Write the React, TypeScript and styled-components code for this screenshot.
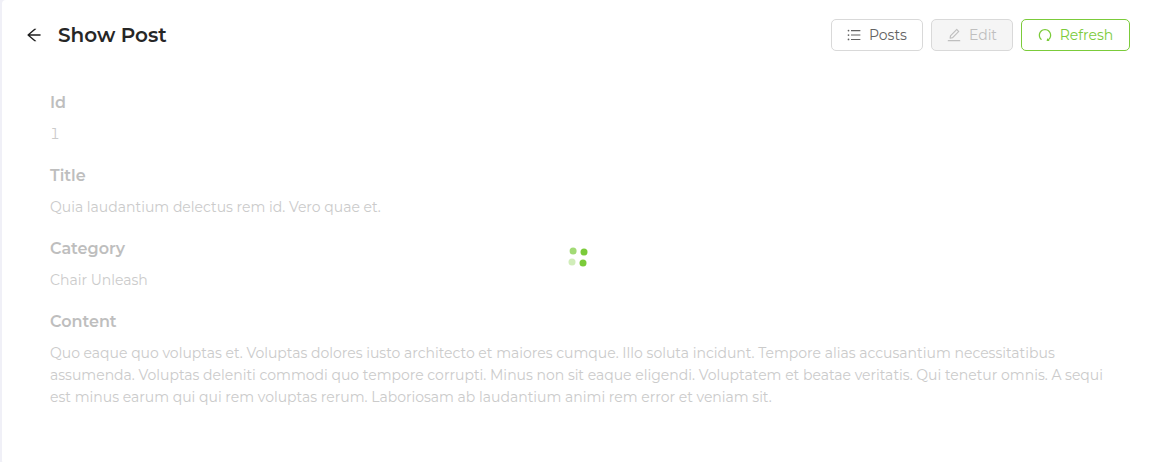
import React from "react";
import styled, { createGlobalStyle } from "styled-components";
import { AiOutlineArrowLeft, AiOutlineEdit, AiOutlineRedo, AiOutlineUnorderedList } from "react-icons/ai";

const GlobalStyle = createGlobalStyle`
  *, *::before, *::after { box-sizing: border-box; }
  body {
    margin: 0;
    background: #f0f0f7;
    color: #262626;
    font-family: Montserrat, Inter, "Liberation Sans", sans-serif;
    font-size: 14px;
    font-variant-numeric: tabular-nums;
    line-height: 22px;
  }
`;

const Card = styled.main`
  min-height: 100vh;
  margin-left: 2px;
  padding: 19px 23px 56px 24px;
  background: #fff;
  border-radius: 4px 0 0 4px;
`;

const Header = styled.header`
  display: flex;
  align-items: center;
  justify-content: space-between;
  height: 32px;
`;

const Heading = styled.div`
  display: flex;
  align-items: center;
  gap: 16px;
`;

const BackButton = styled.button`
  display: flex;
  padding: 0;
  border: 0;
  background: none;
  color: #1f1f1f;
  font-size: 16px;
  cursor: pointer;
`;

const PageTitle = styled.h1`
  margin: 0;
  color: #262626;
  font-size: 20px;
  font-weight: 600;
  line-height: 32px;
`;

const Actions = styled.div`
  display: flex;
  gap: 8px;
`;

const Button = styled.button<{ $primary?: boolean; $minWidth: number }>`
  display: flex;
  align-items: center;
  justify-content: center;
  gap: 8px;
  min-width: ${(p) => p.$minWidth}px;
  height: 32px;
  padding: 0 15px;
  border: 1px solid ${(p) => (p.$primary ? "#7bcb3a" : "#d9d9d9")};
  border-radius: 5px;
  background: #fff;
  color: ${(p) => (p.$primary ? "#7bcb3a" : "#626262")};
  font: inherit;
  cursor: pointer;

  svg {
    font-size: 14px;
  }

  &:disabled {
    background: #f5f5f5;
    color: #bfbfbf;
    cursor: not-allowed;
  }
`;

const Body = styled.section`
  position: relative;
  padding: 40px 24px 0;
`;

const Fields = styled.div`
  display: flex;
  flex-direction: column;
  gap: 19px;
`;

const Label = styled.h2`
  margin: 0 0 8px;
  color: #bebebe;
  font-size: 16px;
  font-weight: 600;
  line-height: 24px;
`;

const Value = styled.p`
  margin: 0;
  color: #cbcbcb;
`;

const Spinner = styled.div`
  position: absolute;
  inset: 54px 0 0;
  display: flex;
  align-items: center;
  justify-content: center;
`;

const ICON_BOX = "64 64 896 896";

const fields = [
  { label: "Id", value: "1" },
  { label: "Title", value: "Quia laudantium delectus rem id. Vero quae et." },
  { label: "Category", value: "Chair Unleash" },
  {
    label: "Content",
    value:
      "Quo eaque quo voluptas et. Voluptas dolores iusto architecto et maiores cumque. Illo soluta incidunt. Tempore alias accusantium necessitatibus assumenda. Voluptas deleniti commodi quo tempore corrupti. Minus non sit eaque eligendi. Voluptatem et beatae veritatis. Qui tenetur omnis. A sequi est minus earum qui qui rem voluptas rerum. Laboriosam ab laudantium animi rem error et veniam sit.",
  },
];

export default function App() {
  return (
    <>
      <GlobalStyle />
      <Card>
        <Header>
          <Heading>
            <BackButton type="button" aria-label="Back">
              <AiOutlineArrowLeft viewBox={ICON_BOX} />
            </BackButton>
            <PageTitle>Show Post</PageTitle>
          </Heading>
          <Actions>
            <Button type="button" $minWidth={92}>
              <AiOutlineUnorderedList viewBox={ICON_BOX} />
              Posts
            </Button>
            <Button type="button" $minWidth={82} disabled>
              <AiOutlineEdit viewBox={ICON_BOX} />
              Edit
            </Button>
            <Button type="button" $minWidth={109} $primary>
              <AiOutlineRedo viewBox={ICON_BOX} />
              Refresh
            </Button>
          </Actions>
        </Header>
        <Body aria-busy="true">
          <Fields>
            {fields.map((field) => (
              <div key={field.label}>
                <Label>{field.label}</Label>
                <Value>{field.value}</Value>
              </div>
            ))}
          </Fields>
          <Spinner role="status" aria-label="Loading">
            <svg width="20" height="20" viewBox="0 0 20 20" fill="#7bcb3a">
              <circle cx="5.1" cy="4" r="3.5" opacity="0.7" />
              <circle cx="16" cy="5" r="3.5" />
              <circle cx="4" cy="15" r="3.5" opacity="0.35" />
              <circle cx="15" cy="16" r="3.5" />
            </svg>
          </Spinner>
        </Body>
      </Card>
    </>
  );
}
